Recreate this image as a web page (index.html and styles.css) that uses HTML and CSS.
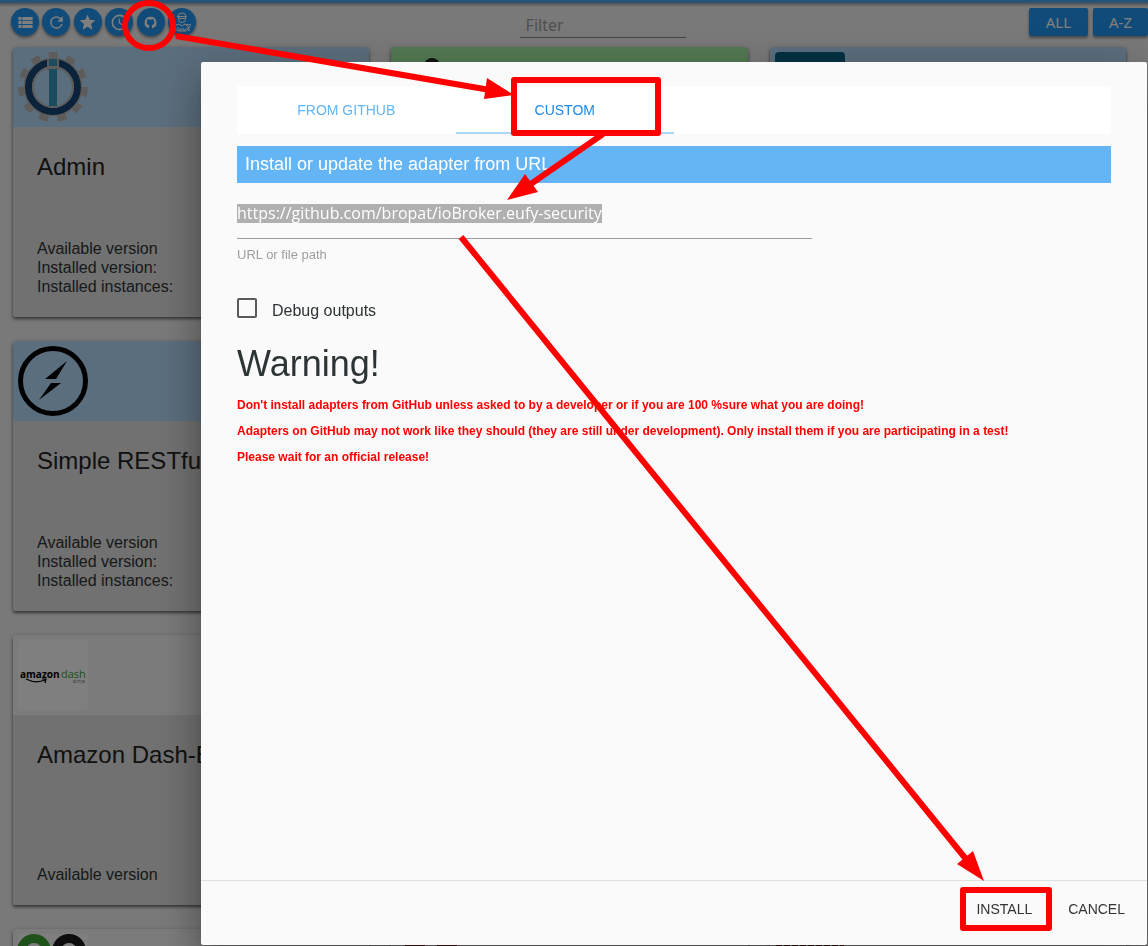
FILE: index.html
```html
<!DOCTYPE html>
<html lang="en">
<head>
<meta charset="utf-8">
<title>ioBroker adapters</title>
<link rel="stylesheet" href="styles.css">
</head>
<body>
<div class="app">
  <header class="toolbar">
    <div class="tools">
      <button class="round" aria-label="List view"><svg viewBox="0 0 24 24"><path d="M3 5h4v4H3zM3 10h4v4H3zM3 15h4v4H3zM8 5h13v4H8zM8 10h13v4H8zM8 15h13v4H8z"/></svg></button>
      <button class="round" aria-label="Refresh"><svg viewBox="0 0 24 24"><path d="M17.65 6.35A7.96 7.96 0 0 0 12 4a8 8 0 1 0 7.73 10h-2.08A6 6 0 1 1 12 6c1.66 0 3.14.69 4.22 1.78L13 11h7V4z"/></svg></button>
      <button class="round" aria-label="Favorites"><svg viewBox="0 0 24 24"><path d="M12 17.27 18.18 21l-1.64-7.03L22 9.24l-7.19-.61L12 2 9.19 8.63 2 9.24l5.46 4.73L5.82 21z"/></svg></button>
      <button class="round" aria-label="Recently updated"><svg viewBox="0 0 24 24"><path d="M12 2a10 10 0 1 0 0 20 10 10 0 0 0 0-20zm0 18a8 8 0 1 1 0-16 8 8 0 0 1 0 16zm.5-13H11v6l5.25 3.15.75-1.23-4.5-2.67z"/></svg></button>
      <button class="round" aria-label="Install from GitHub"><svg viewBox="0 0 24 24"><path d="M12 4.8a7.5 7.5 0 0 0-2.4 14.6c.4.1.5-.2.5-.4v-2.4c.1-.7.3-1 .6-1.3-1.7-.2-3.4-.8-3.4-3.7 0-.8.3-1.5.8-2-.1-.2-.3-1 .1-2 0 0 .6-.2 2 .8a7 7 0 0 1 3.7 0c1.4-1 2-.8 2-.8.4 1 .2 1.8.1 2 .5.5.8 1.2.8 2 0 2.9-1.7 3.5-3.4 3.7.3.3.6.7.6 1.4V19c0 .2.1.5.5.4A7.5 7.500 0 0 0 12 4.800z"/></svg></button>
      <button class="round" aria-label="Expert mode"><svg class="expert" viewBox="0 0 20 20"><path d="M6 4.500a4 3.500 0 0 1 8 0M5 4.500h10M6 6.500h8M6.500 5v2.500a3.500 3 0 0 0 7 0V5M4 19v-2H2l2-4 3-1 3 2 3-2 2 1M6 15v4h8v-3M8 19v-2h4v2M16 19v-4c-2-1-1-3-1-3l1 1h1l1-1c1 2 0 3-1 3v4"/></svg></button>
    </div>
    <input class="filter" type="text" placeholder="Filter" aria-label="Filter">
    <div class="modes"><button class="mode">ALL</button><button class="mode">A-Z</button></div>
  </header>
  <main class="cards">
    <article class="card">
      <div class="card-head blue"><svg viewBox="0 0 70 70"><g fill="none" stroke="#bdb9b4"><circle cx="35" cy="35" r="31" stroke-width="8" stroke-dasharray="8.860 8.850" stroke-dashoffset="4.430" transform="rotate(-90 35 35)"/><circle cx="35" cy="35" r="28.500" stroke-width="2"/></g><circle cx="35" cy="35" r="24.500" fill="#b7dcfb" stroke="#164477" stroke-width="7"/><circle cx="35" cy="35" r="20" fill="none" stroke="#bdb9b4" stroke-width="2"/><path d="M29 6h12v12H29z" fill="#bdb9b4"/><path d="M31 7h8v7h-8zM31 17h8v37h-8z" fill="#3399bd"/></svg></div>
      <div class="card-body"><h2>Admin</h2><p>Available version<br>Installed version:<br>Installed instances:</p></div>
    </article>
    <article class="card">
      <div class="card-head green"><svg viewBox="0 0 70 70"><circle cx="36" cy="14" r="8" fill="#252525"/></svg></div>
      <div class="card-body"></div>
    </article>
    <article class="card">
      <div class="card-head blue"><svg viewBox="0 0 70 70"><rect width="70" height="70" rx="4" fill="#096184"/></svg></div>
      <div class="card-body"></div>
    </article>
    <article class="card">
      <div class="card-head blue"><svg viewBox="0 0 70 70"><circle cx="35" cy="35" r="32.500" fill="none" stroke="#000" stroke-width="5"/><path d="M49 15 27 33h11zM21 54 43 37H33z"/></svg></div>
      <div class="card-body"><h2>Simple RESTful API</h2><p>Available version<br>Installed version:<br>Installed instances:</p></div>
    </article>
    <article class="card"></article>
    <article class="card"></article>
    <article class="card">
      <div class="card-head pale"><svg viewBox="0 0 70 70"><rect width="70" height="70" rx="4" fill="#fff"/><text class="amazon" x="2" y="38">amazon</text><text class="dash" x="43" y="38">dash</text><text class="tiny" x="55" y="43">BUTTON</text><path d="M8 39q10 5 19 1M24 39h4l-1 4" fill="none" stroke="#000" stroke-width="1.200"/></svg></div>
      <div class="card-body"><h2>Amazon Dash-Button</h2><p>Available version</p></div>
    </article>
    <article class="card"></article>
    <article class="card"></article>
    <article class="card">
      <div class="card-head pale"><svg viewBox="0 0 70 70"><rect width="70" height="70" rx="4" fill="#fff"/><circle cx="16" cy="17" r="12.500" fill="none" stroke="#3fa535" stroke-width="9"/><circle cx="51" cy="17" r="12.500" fill="none" stroke="#1b1b1b" stroke-width="9"/></svg></div>
    </article>
    <article class="card">
      <div class="card-head pale"><svg viewBox="0 0 70 70"><path d="M9 10h20v30H9zM41 10h20v30H41z" fill="#8c1028"/></svg></div>
    </article>
    <article class="card">
      <div class="card-head pale"><svg viewBox="0 0 70 70"><path d="M1 14h68" stroke="#8c1028" stroke-width="8" stroke-dasharray="6 2"/></svg></div>
    </article>
  </main>
</div>
<div class="scrim"></div>
<section class="dialog" role="dialog" aria-label="Install adapter">
  <div class="content">
    <nav class="tabs" role="tablist"><button class="tab" role="tab">FROM GITHUB</button><button class="tab active" role="tab" aria-selected="true">CUSTOM</button></nav>
    <h1 class="title">Install or update the adapter from URL</h1>
    <div class="field">
      <div class="line"><input id="url" class="url" type="text" value="https://github.com/bropat/ioBroker.eufy-security"></div>
      <label for="url">URL or file path</label>
    </div>
    <label class="debug"><input type="checkbox">Debug outputs</label>
    <h3 class="warning">Warning!</h3>
    <div class="notes">
      <p>Don't install adapters from GitHub unless asked to by a developer or if you are 100 %sure what you are doing!</p>
      <p>Adapters on GitHub may not work like they should (they are still under development). Only install them if you are participating in a test!</p>
      <p>Please wait for an official release!</p>
    </div>
  </div>
  <footer class="actions"><button>INSTALL</button><button>CANCEL</button></footer>
</section>
<svg class="marks" width="1148" height="946" viewBox="0 0 1148 946" aria-hidden="true">
  <g fill="none" stroke="#f00" stroke-width="6" stroke-linejoin="round">
    <ellipse cx="149" cy="25.500" rx="24" ry="22.500"/>
    <rect x="514" y="80" width="144" height="53"/>
    <rect x="963" y="890" width="86" height="38"/>
    <path d="M176 36 490 90M603 134 525 188M461 237 970 864"/>
  </g>
  <path fill="#f00" d="M514 95 487 78 484 99zM507 200 525 174 538 192zM984 881 973 851 957 864z"/>
</svg>
</body>
</html>
```
FILE: styles.css
```css
* { box-sizing: border-box; }
body {
  margin: 0;
  height: 100vh;
  overflow: hidden;
  background: #f2f2f2;
  color: #2d3436;
  font-family: "Liberation Sans", Arial, sans-serif;
}
button, input { font: inherit; border: 0; outline: 0; }
h1, h2, h3, p { margin: 0; font-weight: 400; }
.app { height: 100vh; overflow: hidden; border-top: 3px solid #52a6e8; }
.toolbar {
  display: grid;
  grid-template-columns: 11fr 166px 10fr;
  height: 44px;
  padding: 5px 0 0 11px;
  background: linear-gradient(#0005, #0000 4px);
}
.tools { display: flex; justify-content: space-between; width: 185px; height: 28px; }
.round {
  display: grid;
  place-items: center;
  width: 28px;
  height: 28px;
  padding: 0;
  border-radius: 50%;
  background: #2196f3;
  box-shadow: 0 2px 3px #0006;
}
.round svg { width: 19px; height: 19px; fill: #fff; }
.round .expert { width: 20px; height: 20px; fill: none; stroke: #fff; stroke-width: 1; }
.filter {
  align-self: start;
  width: 166px;
  height: 30px;
  padding: 4px 6px 0;
  border-bottom: 1px solid #8c8c8c;
  background: none;
  font: 16px/24px "Noto Sans", sans-serif;
}
.filter::placeholder { color: #9e9e9e; }
.modes { display: flex; justify-content: flex-end; gap: 5px; }
.mode {
  height: 28px;
  padding: 0 16px;
  border-radius: 2px;
  background: #2196f3;
  color: #fff;
  font: 15px/28px "Noto Sans", sans-serif;
  box-shadow: 0 2px 3px #0006;
}
.mode:first-child { padding: 0 17px; }
.cards {
  display: grid;
  grid-template-columns: repeat(3, 1fr);
  grid-auto-rows: 270px;
  gap: 24px 22px;
  padding: 0 22px 0 13px;
}
.card {
  display: flex;
  flex-direction: column;
  min-width: 0;
  overflow: hidden;
  border-radius: 4px 4px 2px 2px;
  background: #e2e2e2;
  box-shadow: 0 2px 3px #0007, 0 1px 5px #0003;
}
.card-head { height: 80px; padding: 5px; }
.card-head svg { display: block; width: 70px; height: 70px; }
.blue { background: #b7dcfb; }
.green { background: #a5f3a5; }
.pale { background: #f6f6f6; }
.card-body {
  display: flex;
  flex: 1;
  flex-direction: column;
  justify-content: space-between;
  padding: 24px 24px 21px;
}
.card h2 { color: #222; font-size: 24px; line-height: 32px; white-space: nowrap; }
.card p { font-size: 16px; line-height: 19px; }
.amazon { font: bold 10px "Open Sans", sans-serif; fill: #000; }
.dash { font: 11px "Open Sans", sans-serif; fill: #3fa535; }
.tiny { font: 3px "Open Sans", sans-serif; fill: #444; }
.scrim { position: fixed; inset: 0; background: #00000080; }
.dialog {
  position: fixed;
  inset: 62px 1px 1px 201px;
  display: flex;
  flex-direction: column;
  border-radius: 2px;
  background: #fafafa;
  box-shadow: 0 24px 38px 3px #0003, 0 9px 46px 8px #0002, 0 11px 15px -7px #0003;
}
.content { flex: 1; padding: 24px 36px; }
.tabs { display: grid; grid-template-columns: repeat(4, 1fr); height: 48px; background: #fff; }
.tab { background: none; color: #64b5f6; font-size: 14px; }
.tab.active { color: #1e88e5; border-bottom: 2px solid #a8d8f8; padding-top: 2px; }
.title {
  margin: 12px 0 21px;
  padding: 0 8px;
  background: #64b5f6;
  color: #fff;
  font-size: 18px;
  line-height: 37px;
}
.line { width: 575px; max-width: 100%; height: 35px; border-bottom: 1px solid #9e9e9e; }
.url {
  display: block;
  field-sizing: content;
  height: 19px;
  padding: 0;
  background: #b0b0b0;
  color: #fff;
  font: 16px/19px "Open Sans", "Noto Sans", sans-serif;
}
.field label { display: block; margin-top: 8px; color: #9e9e9e; font-size: 13px; line-height: 16px; }
.debug { display: flex; gap: 15px; margin-top: 35px; font-size: 16px; line-height: 25px; }
.debug input {
  appearance: none;
  width: 20px;
  height: 20px;
  margin: 0;
  border: 2px solid #5a5a5a;
  border-radius: 2px;
}
.warning { margin-top: 21px; font-size: 36px; line-height: 40px; }
.notes { margin-top: 8px; color: #f00; font-size: 12px; line-height: 26px; }
.notes p { font-weight: 700; }
.actions {
  display: flex;
  justify-content: flex-end;
  align-items: center;
  gap: 4px;
  height: 65px;
  padding: 0 6px 8px;
  border-top: 1px solid #e0e0e0;
}
.actions button { height: 36px; padding: 0 16px; background: none; color: #343434; font-size: 14px; }
.marks { position: absolute; top: 0; left: 0; pointer-events: none; }
```
